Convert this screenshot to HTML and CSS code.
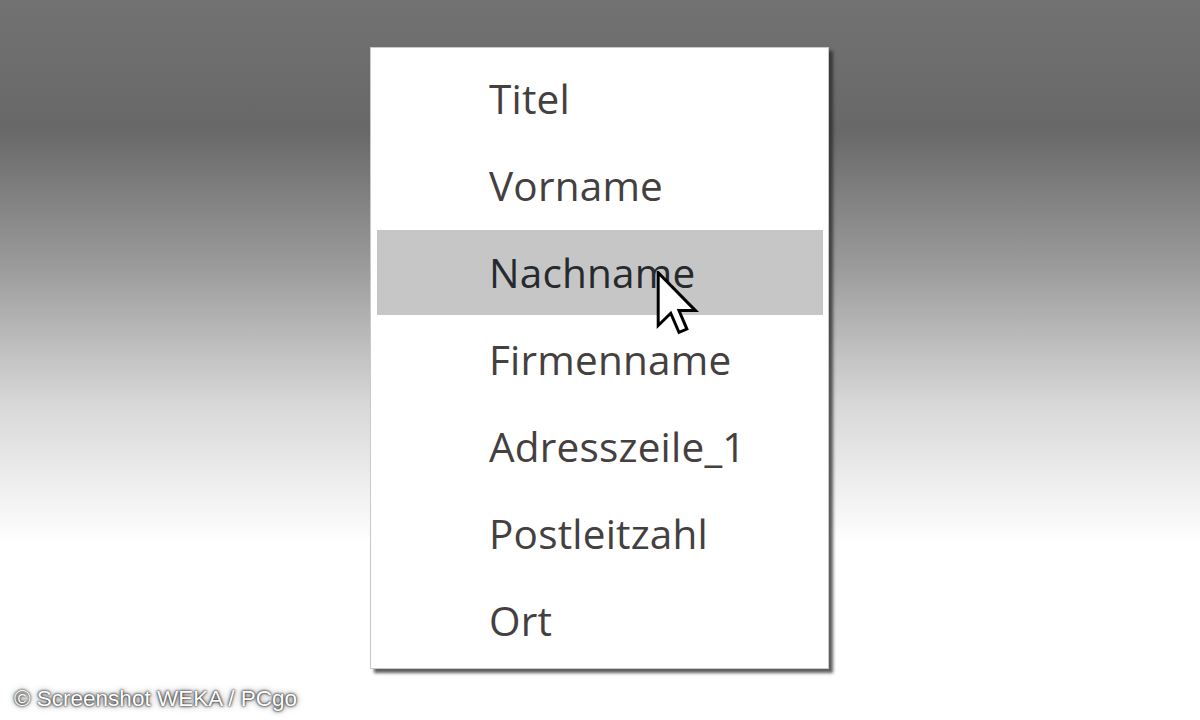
FILE: index.html
```html
<!DOCTYPE html>
<html lang="de">
<head>
<meta charset="utf-8">
<title>Feldliste</title>
<link rel="stylesheet" href="styles.css">
</head>
<body>
<div class="stage">
  <div class="menu">
    <div class="item">Titel</div>
    <div class="item">Vorname</div>
    <div class="item active">Nachname
      <svg class="cursor" width="44" height="66" viewBox="0 0 13 20">
        <path d="M0.5 0.5 L0.5 16.5 L4.3 12.8 L6.8 18.6 L9.2 17.6 L6.8 12 L11.8 12 Z" fill="#fff" stroke="#000" stroke-width="0.9" stroke-linejoin="miter"/>
      </svg>
    </div>
    <div class="item">Firmenname</div>
    <div class="item">Adresszeile_1</div>
    <div class="item">Postleitzahl</div>
    <div class="item">Ort</div>
  </div>
  <div class="credit">© Screenshot WEKA / PCgo</div>
</div>
</body>
</html>
```
FILE: styles.css
```css
html, body {
  margin: 0;
  padding: 0;
}
body {
  width: 1200px;
  height: 720px;
  overflow: hidden;
  background: linear-gradient(to bottom, #727272 0px, #686868 130px, #9a9a9a 265px, #d8d8d8 405px, #ffffff 545px, #ffffff 720px);
}
.stage {
  position: relative;
  width: 1200px;
  height: 720px;
  display: flex;
  flex-direction: column;
  align-items: flex-start;
}
.menu {
  margin: 47px 0 0 370px;
  width: 446px;
  padding: 8px 5px 5px 6px;
  background: #ffffff;
  border: 1px solid #c8c8c8;
  box-shadow: 4px 4px 3px rgba(40, 40, 40, 0.75);
  display: flex;
  flex-direction: column;
  gap: 2px;
}
.item {
  position: relative;
  height: 85px;
  display: flex;
  align-items: center;
  padding-left: 112px;
  font-family: "Open Sans", "Noto Sans", sans-serif;
  font-size: 40.5px;
  color: #454040;
  letter-spacing: 0.2px;
}
.item.active {
  background: #c6c6c6;
  color: #262a2e;
}
.cursor {
  position: absolute;
  left: 279px;
  top: 41px;
}
.credit {
  position: absolute;
  left: 14px;
  top: 686px;
  font-family: "Liberation Sans", Arial, sans-serif;
  font-size: 22.5px;
  color: #ffffff;
  letter-spacing: 0;
  text-shadow: 0 0 2px #222, 0 0 3px #444, 0 0 6px #666;
}
```
